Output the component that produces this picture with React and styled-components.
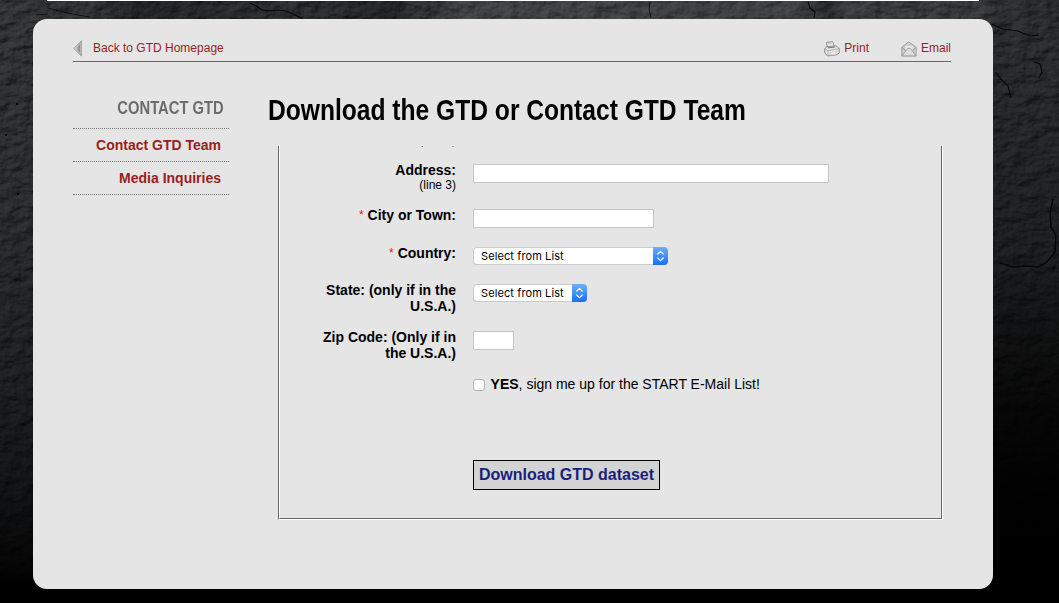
import React from "react";
import styled, { createGlobalStyle } from "styled-components";

const Global = createGlobalStyle`
  * { box-sizing: border-box; }
  body {
    margin: 0;
    background: #000;
    font-family: "Liberation Sans", Arial, sans-serif;
    color: #000;
    overflow: hidden;
  }
`;

const Page = styled.div`
  position: relative;
  width: 1059px;
  height: 603px;
  overflow: hidden;
`;

const Texture = styled.svg`
  position: absolute;
  inset: 0;
`;

const Content = styled.div`
  position: relative;
  width: 960px;
  margin-left: 33px;
`;

const BannerEdge = styled.div`
  height: 1px;
  margin: 0 14px;
  background: #fff;
`;

const Card = styled.main`
  height: 570px;
  margin-top: 18px;
  padding: 20px 42px 0 40px;
  background: #e5e5e5;
  border-radius: 14px;
`;

const TopBar = styled.nav`
  display: flex;
  align-items: center;
  height: 23px;
  padding-bottom: 4px;
  border-bottom: 1px solid #6b6566;
`;

const TopLink = styled.a`
  display: flex;
  align-items: center;
  gap: ${(p) => p.$gap}px;
  margin-left: ${(p) => p.$left || "0"};
  font-size: 12px;
  line-height: 18px;
  color: #9e1a1d;
  svg { display: block; margin-top: 1px; }
`;

const Columns = styled.div`
  display: flex;
  align-items: flex-start;
`;

const Sidebar = styled.aside`
  width: 156px;
  padding-top: 35px;
  margin-right: 39px;
`;

const Narrow = styled.span`
  display: inline-block;
  white-space: nowrap;
  transform: scaleX(0.82);
  transform-origin: ${(p) => p.$origin} center;
`;

const SideTitle = styled.h2`
  display: flex;
  justify-content: flex-end;
  height: 31px;
  margin: 0;
  padding-right: 5px;
  font-size: 18px;
  line-height: 23px;
  color: #6c6c6c;
`;

const SideItem = styled.a`
  display: block;
  height: 33px;
  padding-right: 8px;
  border-top: 1px dotted #777;
  text-align: right;
  font-size: 14px;
  font-weight: bold;
  line-height: 33px;
  color: #9a1e20;
  &:last-child { height: 34px; border-bottom: 1px dotted #777; }
`;

const Main = styled.section`
  flex: 1;
`;

const Title = styled.h1`
  height: 51px;
  margin: 33px 0 0;
  font-size: 30px;
  line-height: 29px;
`;

const FormFrame = styled.div`
  width: 665px;
  height: 374px;
  margin-left: 10px;
  border: solid #fff;
  border-width: 0 1px 1px 0;
  border-left: 1px solid #666;
`;

const FormView = styled.form`
  height: 373px;
  overflow: hidden;
  border: solid #666;
  border-width: 0 1px 1px 0;
  border-left: 1px solid #fff;
`;

const Rows = styled.div`
  margin-top: -13px;
`;

const Row = styled.div`
  display: flex;
  gap: 17px;
  height: ${(p) => p.$height}px;
`;

const Label = styled.label`
  width: 176px;
  padding-left: 36px;
  text-align: right;
  font-size: 14px;
  font-weight: bold;
  line-height: 16px;
`;

const LineNote = styled.span`
  display: block;
  margin-top: -1px;
  font-size: 12px;
  font-weight: normal;
  opacity: ${(p) => (p.$faint ? 0.6 : 1)};
`;

const Required = styled.span`
  position: relative;
  top: -1px;
  font-size: 12px;
  font-weight: normal;
  color: #e02020;
`;

const TextInput = styled.input`
  width: ${(p) => p.$width}px;
  height: 19px;
  margin: 2px 0 0;
  padding: 0 2px;
  border: 1px solid #c4c4c4;
  border-radius: 0;
  background: #fff;
  outline: none;
`;

const SelectBox = styled.div`
  display: flex;
  width: ${(p) => p.$width}px;
  height: 18px;
  margin-top: 2px;
  border-radius: 4px;
  overflow: hidden;
  background: #fff;
  box-shadow: inset 0 0 0 1px #cbcbcb, inset 0 -1px 0 #aaa;
`;

const SelectText = styled.span`
  flex: 1;
  padding-left: 8px;
  font-family: Inter, sans-serif;
  font-size: 11px;
  line-height: 18px;
  letter-spacing: 0.1px;
  white-space: nowrap;
`;

const SelectArrows = styled.span`
  width: 15px;
  background: linear-gradient(#6bb1f9, #1770f5);
  svg { display: block; }
`;

const CheckLabel = styled.label`
  display: flex;
  align-items: flex-start;
  font-size: 14px;
  line-height: 16px;
  white-space: pre;
`;

const CheckBox = styled.input`
  appearance: none;
  width: 12px;
  height: 12px;
  margin: 3px 5.6px 0 0;
  border: 1px solid #b2b2b2;
  border-radius: 3px;
  background: #fff;
`;

const Submit = styled.button`
  width: 187px;
  height: 30px;
  padding: 0;
  border: 1px solid #000;
  border-radius: 0;
  background: #d3d3d3;
  font: bold 16px "Liberation Sans", Arial, sans-serif;
  color: #191f7c;
`;

function Background() {
  return (
    <Texture width="1059" height="603" viewBox="0 0 1059 603">
      <defs>
        <linearGradient id="fade" x1="0" y1="0" x2="0" y2="1">
          <stop offset="0" stopColor="#323435" />
          <stop offset="0.35" stopColor="#2a2b2d" />
          <stop offset="0.6" stopColor="#1f2022" />
          <stop offset="0.8" stopColor="#131416" />
          <stop offset="0.93" stopColor="#060606" />
          <stop offset="0.98" stopColor="#000" />
        </linearGradient>
        <linearGradient id="shade" x1="0" y1="0" x2="0" y2="1">
          <stop offset="0" stopColor="#000" stopOpacity="0.1" />
          <stop offset="0.45" stopColor="#000" stopOpacity="0.3" />
          <stop offset="0.68" stopColor="#000" stopOpacity="0.75" />
          <stop offset="0.9" stopColor="#000" />
        </linearGradient>
        <linearGradient id="band">
          <stop offset="0" stopColor="#000" stopOpacity="0" />
          <stop offset="0.09" stopColor="#000" stopOpacity="0.05" />
          <stop offset="0.13" stopColor="#000" stopOpacity="0.3" />
          <stop offset="0.28" stopColor="#000" stopOpacity="0.1" />
          <stop offset="0.37" stopColor="#000" stopOpacity="0.3" />
          <stop offset="0.4" stopColor="#000" stopOpacity="0" />
          <stop offset="0.43" stopColor="#fff" stopOpacity="0.07" />
          <stop offset="0.73" stopColor="#fff" stopOpacity="0.06" />
          <stop offset="0.78" stopColor="#000" stopOpacity="0.2" />
          <stop offset="0.82" stopColor="#fff" stopOpacity="0.03" />
          <stop offset="1" stopColor="#000" stopOpacity="0.1" />
        </linearGradient>
        <filter id="stone" x="0" y="0" width="100%" height="100%" colorInterpolationFilters="sRGB">
          <feTurbulence type="fractalNoise" baseFrequency="0.06 0.1" numOctaves="6" seed="23" result="n" />
          <feDiffuseLighting in="n" surfaceScale="2.6" lightingColor="#fff" result="l">
            <feDistantLight azimuth="225" elevation="52" />
          </feDiffuseLighting>
          <feComposite in="l" in2="SourceGraphic" operator="arithmetic" k1="1.25" k2="0" k3="0" k4="0" />
        </filter>
      </defs>
      <rect width="1059" height="603" fill="url(#fade)" filter="url(#stone)" />
      <rect width="1059" height="20" fill="url(#band)" />
      <rect x="990" width="69" height="603" fill="url(#shade)" />
      <g fill="none" stroke="#050506" strokeWidth="1.1">
        <path d="M36 15l12-1M48 8l12 3 12 3 18 3" strokeWidth="0.8" />
        <path d="M250 3l6 3 6 4 8 1 8-1 8 1 9 4 8 4" />
        <path d="M650 2l-1 7 2 9" strokeWidth="0.7" />
        <path d="M808 2l2 6 5 4-1 6" />
        <path d="M991 24l12 5 15 2 12 5 9-1" />
        <path d="M995 72l7 8 6 6 3 12" />
        <path d="M1034 62l6 2 2 8-3 6" />
        <path d="M1053 199l-3 14 1 14 5 8-1 17-8 10-9 5-11-1-14 1-13-4" strokeWidth="1.4" />
      </g>
      <g fill="#000">
        <rect x="16" y="103" width="2" height="2" />
        <rect x="5" y="134" width="2" height="2" />
        <rect x="17" y="193" width="2" height="2" />
      </g>
    </Texture>
  );
}

function BackIcon() {
  return (
    <svg width="10" height="17" viewBox="0 0 10 17">
      <defs>
        <linearGradient id="arrow" x1="0" x2="1">
          <stop offset="0" stopColor="#ddd" />
          <stop offset="1" stopColor="#777" />
        </linearGradient>
      </defs>
      <path d="M8.5 .8V16L.7 8.5z" fill="url(#arrow)" stroke="#a0a0a0" strokeWidth=".9" />
      <path d="M7.6 3v11L2 8.5z" fill="none" stroke="#d5d5d5" strokeWidth=".7" />
    </svg>
  );
}

function PrintIcon() {
  return (
    <svg width="16" height="16" viewBox="0 0 16 16" stroke="#777" strokeWidth=".8" strokeLinejoin="round">
      <path d="M3.4 6L2.4 1.4 8.6.7 10.5 5.2" fill="#eee" />
      <path d="M4.2 3l3.8-.5" fill="none" stroke="#b5b5b5" />
      <path d="M.6 7.8L3 5.6 12 4.8 15.2 7.6V12L12.8 13.7 3.4 15 .8 11.8z" fill="#e4e4e4" />
      <path d="M.6 7.8L4 9.6 15.2 7.6M4 9.6V14.6" fill="none" stroke="#aaa" />
      <path d="M6 11.4l6-.8v2.4l-6 1z" fill="#f8f8f8" stroke="#ccc" />
      <path d="M3.8 6.8l7-.7" stroke="#555" />
    </svg>
  );
}

function EmailIcon() {
  return (
    <svg width="16" height="16" viewBox="0 0 16 16" stroke="#999" strokeWidth=".9" strokeLinejoin="round">
      <path d="M.8 6.2L7.6.8 15.1 6.2V15H.8z" fill="#d2d2d2" />
      <path d="M3 9V5.7L5.2 4h5.4L13 5.7V9L10 10.3H6z" fill="#e6e6e6" stroke="#bbb" />
      <path d="M.8 6.6L5.8 10.2.8 15M15.1 6.6L10.2 10.2 15.1 15" fill="none" />
      <path d="M1 14.9L5 9.3Q8 5 11 9.3L15 14.9z" fill="#dedede" />
    </svg>
  );
}

function Select({ width }) {
  return (
    <SelectBox $width={width}>
      <SelectText>Select from List</SelectText>
      <SelectArrows>
        <svg width="15" height="18" viewBox="0 0 15 18" fill="none" stroke="#fff" strokeWidth="1.25" strokeLinecap="round" strokeLinejoin="round">
          <path d="M4.8 7L7.5 4.4 10.2 7M4.8 11L7.5 13.6 10.2 11" />
        </svg>
      </SelectArrows>
    </SelectBox>
  );
}

export default function App() {
  return (
    <Page>
      <Global />
      <Background />
      <Content>
        <BannerEdge />
        <Card>
          <TopBar>
            <TopLink $gap={10}><BackIcon />Back to GTD Homepage</TopLink>
            <TopLink $gap={4} $left="auto"><PrintIcon />Print</TopLink>
            <TopLink $gap={4} $left="32px"><EmailIcon />Email</TopLink>
          </TopBar>
          <Columns>
            <Sidebar>
              <SideTitle><Narrow $origin="right">CONTACT GTD</Narrow></SideTitle>
              <SideItem>Contact GTD Team</SideItem>
              <SideItem>Media Inquiries</SideItem>
            </Sidebar>
            <Main>
              <Title><Narrow $origin="left">Download the GTD or Contact GTD Team</Narrow></Title>
              <FormFrame>
                <FormView>
                  <Rows>
                    <Row $height={29}>
                      <Label><LineNote $faint>(line 2)</LineNote></Label>
                    </Row>
                    <Row $height={45}>
                      <Label>Address:<LineNote>(line 3)</LineNote></Label>
                      <TextInput $width={356} />
                    </Row>
                    <Row $height={38}>
                      <Label><Required>*</Required> City or Town:</Label>
                      <TextInput $width={181} />
                    </Row>
                    <Row $height={37}>
                      <Label><Required>*</Required> Country:</Label>
                      <Select width={195} />
                    </Row>
                    <Row $height={47}>
                      <Label>State: (only if in the U.S.A.)</Label>
                      <Select width={114} />
                    </Row>
                    <Row $height={47}>
                      <Label>Zip Code: (Only if in the U.S.A.)</Label>
                      <TextInput $width={41} />
                    </Row>
                    <Row $height={84}>
                      <Label />
                      <CheckLabel><CheckBox type="checkbox" /><b>YES</b>, sign me up for the START E-Mail List!</CheckLabel>
                    </Row>
                    <Row $height={30}>
                      <Label />
                      <Submit type="button">Download GTD dataset</Submit>
                    </Row>
                  </Rows>
                </FormView>
              </FormFrame>
            </Main>
          </Columns>
        </Card>
      </Content>
    </Page>
  );
}
